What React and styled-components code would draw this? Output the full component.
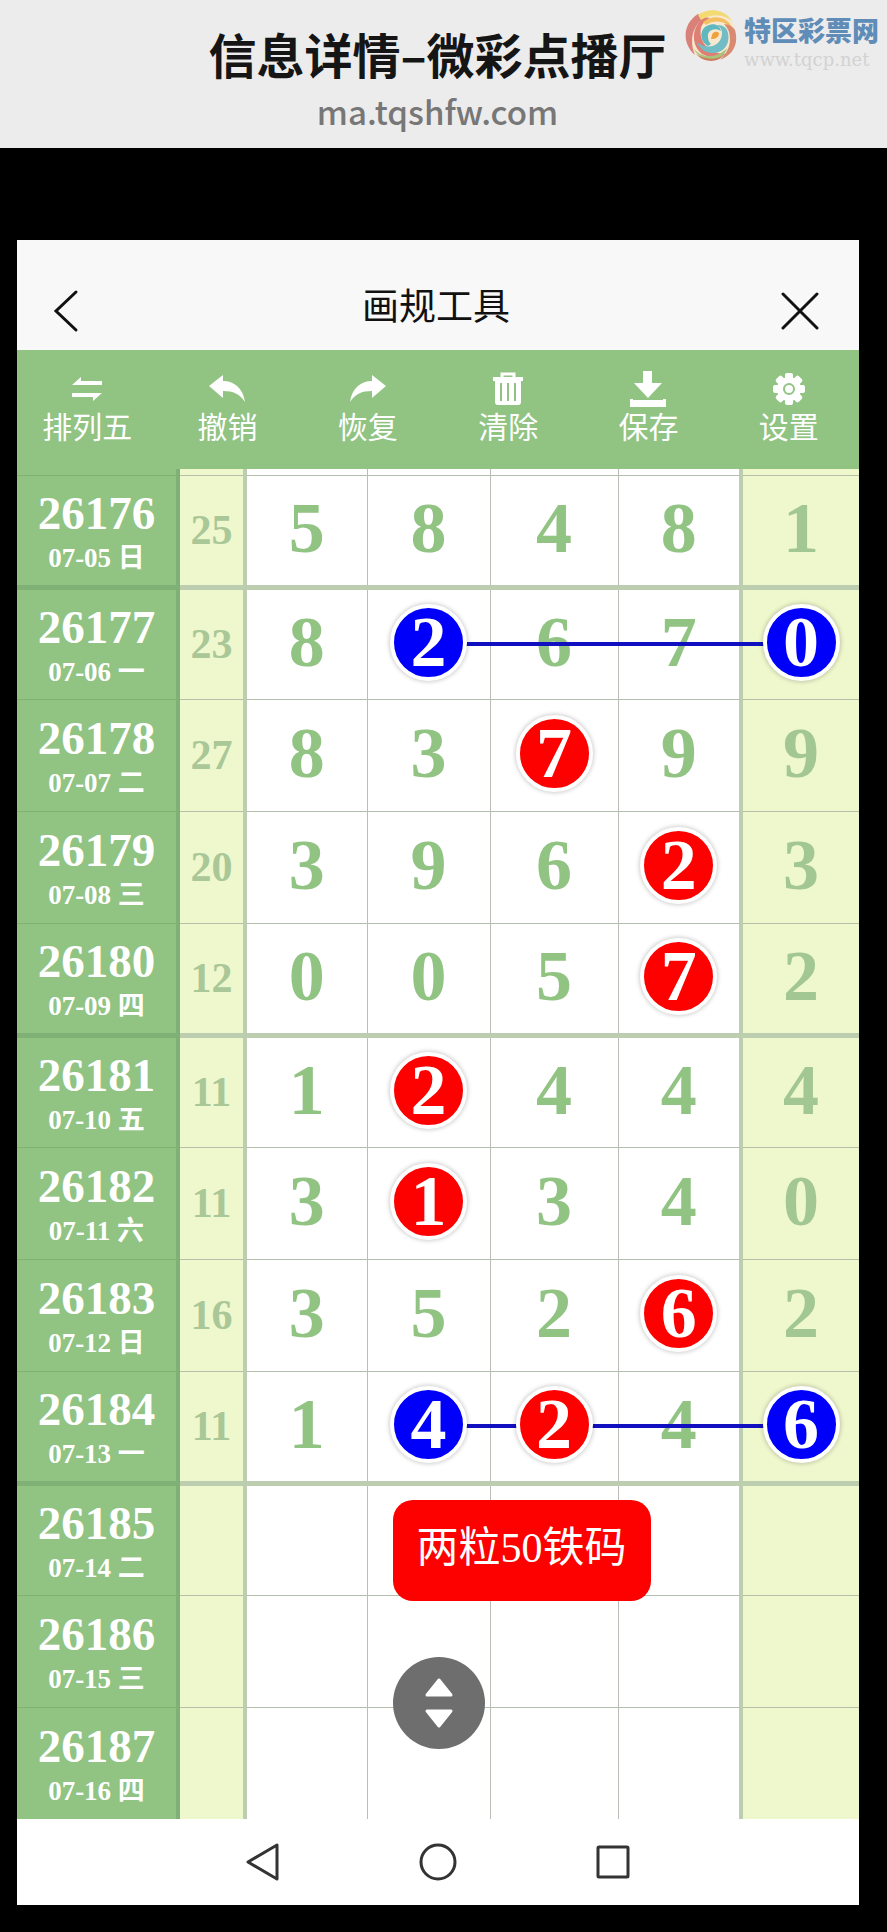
import React from "react";
import styled, { createGlobalStyle, css } from "styled-components";

const GlobalStyle = createGlobalStyle`
  * {
    box-sizing: border-box;
  }

  body {
    margin: 0;
    background: #000;
    font-family: "Liberation Serif", "Noto Sans CJK SC", serif;
  }

  button {
    padding: 0;
    border: 0;
    background: none;
    font: inherit;
    color: inherit;
    cursor: pointer;
  }
`;

// mark: "blue" | "red", link: "start" | "through" | "end"
const draws = [
  { issue: "26176", date: "07-05 日", sum: 25, balls: [5, 8, 4, 8, 1], thick: true },
  {
    issue: "26177",
    date: "07-06 一",
    sum: 23,
    balls: [8, 2, 6, 7, 0],
    marks: { 1: "blue", 4: "blue" },
    links: { 1: "start", 2: "through", 3: "through", 4: "end" },
  },
  { issue: "26178", date: "07-07 二", sum: 27, balls: [8, 3, 7, 9, 9], marks: { 2: "red" } },
  { issue: "26179", date: "07-08 三", sum: 20, balls: [3, 9, 6, 2, 3], marks: { 3: "red" } },
  { issue: "26180", date: "07-09 四", sum: 12, balls: [0, 0, 5, 7, 2], marks: { 3: "red" }, thick: true },
  { issue: "26181", date: "07-10 五", sum: 11, balls: [1, 2, 4, 4, 4], marks: { 1: "red" } },
  { issue: "26182", date: "07-11 六", sum: 11, balls: [3, 1, 3, 4, 0], marks: { 1: "red" } },
  { issue: "26183", date: "07-12 日", sum: 16, balls: [3, 5, 2, 6, 2], marks: { 3: "red" } },
  {
    issue: "26184",
    date: "07-13 一",
    sum: 11,
    balls: [1, 4, 2, 4, 6],
    marks: { 1: "blue", 2: "red", 4: "blue" },
    links: { 1: "start", 2: "through", 3: "through", 4: "end" },
    thick: true,
  },
  { issue: "26185", date: "07-14 二", balls: [], note: { column: 1, text: "两粒50铁码" } },
  { issue: "26186", date: "07-15 三", balls: [] },
  { issue: "26187", date: "07-16 四", balls: [] },
];

const columns = [0, 1, 2, 3, 4];

const SwapIcon = () => (
  <svg width="30" height="26" viewBox="0 0 30 26" fill="#fff" aria-hidden="true">
    <path d="M0 9 9 1v4h21v4zM30 17l-9 8v-4H0v-4z" />
  </svg>
);

const UndoIcon = () => (
  <svg width="36" height="28" viewBox="0 0 36 28" fill="#fff" aria-hidden="true">
    <path d="M0 11 14 0v6c11 0 20 7 22 21-5-8-12-11-22-11v7z" />
  </svg>
);

const RedoIcon = () => (
  <svg width="36" height="28" viewBox="0 0 36 28" fill="#fff" aria-hidden="true">
    <path d="M36 11 22 0v6C11 6 2 13 0 27c5-8 12-11 22-11v7z" />
  </svg>
);

const TrashIcon = () => (
  <svg width="30" height="34" viewBox="0 0 30 34" aria-hidden="true">
    <path d="M9 6V2h12v4" fill="none" stroke="#fff" strokeWidth="3" />
    <path d="M0 5h30v4h-2v21q0 3-3 3H5q-3 0-3-3V9H0z" fill="#fff" />
    <path d="M8 11v18M15 11v18M22 11v18" stroke="#91c383" strokeWidth="2" />
  </svg>
);

const SaveIcon = () => (
  <svg width="36" height="36" viewBox="0 0 36 36" fill="#fff" aria-hidden="true">
    <path d="M13 0h9v12h10L18 27 4 12h9z" />
    <path d="M0 28h3v1h30v-1h3v8H0z" />
  </svg>
);

const GearIcon = () => (
  <svg width="34" height="34" viewBox="0 0 34 34" aria-hidden="true">
    <g fill="#fff">
      <circle cx="17" cy="17" r="12" />
      {[0, 45, 90, 135, 180, 225, 270, 315].map((angle) => (
        <rect key={angle} x="13" y="1" width="8" height="9" rx="2" transform={`rotate(${angle} 17 17)`} />
      ))}
    </g>
    <circle cx="17" cy="17" r="5" fill="none" stroke="#91c383" strokeWidth="2" />
  </svg>
);

const SwirlLogo = () => (
  <svg width="54" height="54" viewBox="0 0 54 54" aria-hidden="true">
    <circle cx="27" cy="27" r="25" fill="#f6e9cf" />
    <path d="M14 6C-2 16-2 36 11 47 5 33 8 17 22 8z" fill="#d9807a" />
    <path d="M20 9C8 18 6 36 18 46c10 5 18 4 24 0C26 46 14 34 17 20c1-4 5-8 9-10z" fill="#df7f74" />
    <path d="M14 7C25-1 41 1 48 13 39 6 28 5 17 12z" fill="#f3da72" />
    <path d="M19 14C30 5 46 9 50 24 44 14 32 10 22 17z" fill="#f2c060" />
    <path d="M51 22c4 14-2 25-15 30 8-8 12-17 9-28-1-3-3-6-5-8 5 0 9 3 11 6z" fill="#d98a72" />
    <path d="M43 22c5 13-3 24-16 23-7-1-12-5-14-11 10 9 25 4 25-9 0-4-2-6-5-8 4 0 8 1 10 5z" fill="#72bcc6" />
    <path d="M9 40c9 11 24 11 34 0-3 13-24 18-34 0z" fill="#a6c47c" />
    <path d="M12 46c9 6 20 6 28 1-6 8-20 8-28-1z" fill="#cf7b5c" />
    <path d="M24 38c-9-5-9-18 1-21 6-2 11 1 12 6-6-4-14-1-13 6 0 3 1 5 3 7z" fill="#5fb7bf" />
    <path d="M28 27c1-4 5-4 7-2 0 4-3 6-8 6z" fill="#f0a03c" />
  </svg>
);

const tools = [
  { label: "排列五", Icon: SwapIcon },
  { label: "撤销", Icon: UndoIcon },
  { label: "恢复", Icon: RedoIcon },
  { label: "清除", Icon: TrashIcon },
  { label: "保存", Icon: SaveIcon },
  { label: "设置", Icon: GearIcon },
];

const App = () => {
  return (
    <Page>
      <GlobalStyle />
      <SiteHeader>
        <SiteTitle>信息详情–微彩点播厅</SiteTitle>
        <SiteUrl>ma.tqshfw.com</SiteUrl>
        <Brand>
          <SwirlLogo />
          <BrandText>
            <BrandName>特区彩票网</BrandName>
            <BrandUrl>www.tqcp.net</BrandUrl>
          </BrandText>
        </Brand>
      </SiteHeader>

      <Phone>
        <TitleBar>
          <BarButton aria-label="返回">
            <svg width="26" height="44" viewBox="0 0 26 44" fill="none" stroke="#111" strokeWidth="3" strokeLinecap="round">
              <path d="M23 3 3 22l20 19" />
            </svg>
          </BarButton>
          <Title>画规工具</Title>
          <BarButton aria-label="关闭" $end>
            <svg width="38" height="38" viewBox="0 0 38 38" fill="none" stroke="#111" strokeWidth="3" strokeLinecap="round">
              <path d="M2 2l34 34M36 2 2 36" />
            </svg>
          </BarButton>
        </TitleBar>

        <Toolbar>
          {tools.map(({ label, Icon }) => (
            <Tool key={label}>
              <ToolIcon>
                <Icon />
              </ToolIcon>
              {label}
            </Tool>
          ))}
        </Toolbar>

        <Board>
          <Chart>
            <colgroup>
              <Col $width={161} />
              <Col $width={67} />
              <Col $width={122} />
              <Col $width={123} />
              <Col $width={128} />
              <Col $width={123} />
              <Col $width={118} />
            </colgroup>
            <tbody>
              <SliverRow aria-hidden="true">
                <IssueCell as="td" />
                <SumCell />
                {columns.map((i) => (
                  <BallCell key={i} $column={i} />
                ))}
              </SliverRow>
              {draws.map((draw) => (
                <DrawRow key={draw.issue} draw={draw} />
              ))}
            </tbody>
          </Chart>
          <ScrollButton aria-label="滚动">
            <svg width="30" height="52" viewBox="0 0 30 52" fill="#fff" stroke="#fff" strokeWidth="3" strokeLinejoin="round">
              <path d="M15 3 27 18H3zM15 49 27 34H3z" />
            </svg>
          </ScrollButton>
        </Board>

        <NavBar>
          <button aria-label="后退">
            <NavIcon viewBox="0 0 38 38">
              <path d="M33 2v34L4 19z" />
            </NavIcon>
          </button>
          <button aria-label="主页">
            <NavIcon viewBox="0 0 38 38">
              <circle cx="19" cy="19" r="17" />
            </NavIcon>
          </button>
          <button aria-label="最近任务">
            <NavIcon viewBox="0 0 38 38">
              <rect x="4" y="4" width="30" height="30" rx="1" />
            </NavIcon>
          </button>
        </NavBar>
      </Phone>
    </Page>
  );
};

const DrawRow = ({ draw }) => {
  const { issue, date, sum, balls, marks = {}, links = {}, note, thick } = draw;

  return (
    <Row>
      <IssueCell scope="row" $thick={thick}>
        <Issue>{issue}</Issue>
        <DrawDate>{date}</DrawDate>
      </IssueCell>
      <SumCell $thick={thick}>{sum}</SumCell>
      {columns.map((i) => (
        <BallCell key={i} $column={i} $thick={thick}>
          {marks[i] ? <Ball $color={marks[i]}>{balls[i]}</Ball> : balls[i]}
          {links[i] && <Link $part={links[i]} />}
          {note && note.column === i && <Note>{note.text}</Note>}
        </BallCell>
      ))}
    </Row>
  );
};

export default App;

const Page = styled.div`
  padding-bottom: 27px;
`;

const SiteHeader = styled.header`
  position: relative;
  display: flex;
  flex-direction: column;
  align-items: center;
  height: 148px;
  padding: 20px 12px 0 0;
  background: #ececec;
`;

const SiteTitle = styled.h1`
  margin: 0;
  font: 700 48px/66px "Noto Sans CJK SC", sans-serif;
  color: #151515;
`;

const SiteUrl = styled.p`
  margin: 0;
  font: 500 33px/50px "Noto Sans CJK SC", sans-serif;
  color: #777;
`;

const Brand = styled.div`
  position: absolute;
  top: 8px;
  right: 8px;
  display: flex;
  gap: 6px;
`;

const BrandText = styled.div`
  display: flex;
  flex-direction: column;
  padding-top: 3px;
`;

const BrandName = styled.span`
  font: 900 27px/38px "Noto Sans CJK SC", sans-serif;
  color: #5f8db8;
`;

const BrandUrl = styled.span`
  font: 18px/22px "DejaVu Serif", serif;
  color: #d2d2d2;
`;

const Phone = styled.main`
  margin: 92px 28px 0 17px;
  background: #fff;
`;

const TitleBar = styled.div`
  display: grid;
  grid-template-columns: 1fr auto 1fr;
  align-items: center;
  height: 110px;
  padding: 32px 40px 0 36px;
  background: #f8f8f8;
`;

const BarButton = styled.button`
  display: flex;
  justify-self: ${({ $end }) => ($end ? "end" : "start")};
`;

const Title = styled.h2`
  margin: 0;
  padding-bottom: 14px;
  font: 400 37px/44px "Noto Sans CJK SC", sans-serif;
  color: #111;
`;

const Toolbar = styled.div`
  display: grid;
  grid-template-columns: repeat(6, 1fr);
  height: 119px;
  background: #91c383;
`;

const Tool = styled.button`
  && {
    display: flex;
    flex-direction: column;
    align-items: center;
    padding-top: 20px;
    font: 30px/34px "Noto Sans CJK SC", sans-serif;
    color: #fff;
  }
`;

const ToolIcon = styled.span`
  display: flex;
  align-items: center;
  height: 38px;
`;

const Board = styled.div`
  position: relative;
`;

const Chart = styled.table`
  width: 100%;
  table-layout: fixed;
  border-collapse: collapse;
`;

const Col = styled.col`
  width: ${({ $width }) => $width}px;
`;

const Row = styled.tr`
  height: 112px;

  &:last-child > * {
    border-bottom: 0;
  }
`;

const SliverRow = styled.tr`
  height: 6px;
`;

const cell = css`
  padding: 0;
  text-align: center;
  vertical-align: middle;
  border-bottom: ${({ $thick }) => ($thick ? "5px solid #bccdb0" : "1px solid #b3bfab")};
`;

const IssueCell = styled.th`
  ${cell}
  background: #91c383;
  border-right: 4px solid #7fb075;
  border-bottom-color: #7fb075;
  color: #fff;
`;

const Issue = styled.div`
  padding-top: 8px;
  font-size: 47px;
  line-height: 48px;
`;

const DrawDate = styled.div`
  font-size: 27px;
  line-height: 42px;
`;

const SumCell = styled.td`
  ${cell}
  background: #eff7cd;
  border-right: 4px solid #bccdb0;
  font-size: 42px;
  font-weight: bold;
  color: #a9c797;
`;

const BallCell = styled.td`
  ${cell}
  position: relative;
  padding-bottom: 4px;
  border-right: ${({ $column }) => ($column === 3 ? "4px solid #bccdb0" : "1px solid #b9bfb6")};
  font-size: 72px;
  line-height: 72px;
  font-weight: bold;
  color: #91c383;

  ${({ $column }) =>
    $column === 4 &&
    css`
      background: #eff7cd;
      border-right: 0;
      color: #a3c792;
    `}
`;

const ballColors = { blue: "#0000fa", red: "#fd0000" };

const Ball = styled.span`
  position: relative;
  z-index: 2;
  display: block;
  width: 77px;
  margin: 0 auto;
  border: 4px solid #fff;
  border-radius: 50%;
  box-shadow: 0 0 4px 1px rgba(0, 0, 0, 0.2);
  background: ${({ $color }) => ballColors[$color]};
  line-height: 69px;
  color: #fff;
`;

const Link = styled.i`
  position: absolute;
  z-index: 1;
  top: 50%;
  left: ${({ $part }) => ($part === "start" ? "50%" : "-3px")};
  right: ${({ $part }) => ($part === "end" ? "50%" : "-3px")};
  height: 4px;
  margin-top: -2px;
  background: #1010c0;
`;

const Note = styled.div`
  position: absolute;
  z-index: 3;
  top: 14px;
  left: 25px;
  padding: 18px 24px 23px;
  border-radius: 20px;
  background: #fd0000;
  font-size: 42px;
  line-height: 60px;
  font-weight: normal;
  white-space: nowrap;
  color: #fff;
`;

const ScrollButton = styled.button`
  && {
    position: absolute;
    z-index: 3;
    bottom: 70px;
    left: calc(50% - 45px);
    display: flex;
    align-items: center;
    justify-content: center;
    width: 92px;
    height: 92px;
    border-radius: 50%;
    background: #6e6e6e;
  }
`;

const NavBar = styled.nav`
  display: flex;
  align-items: center;
  justify-content: center;
  gap: 137px;
  height: 86px;
`;

const NavIcon = styled.svg`
  display: block;
  width: 38px;
  height: 38px;
  fill: none;
  stroke: #333;
  stroke-width: 3;
  stroke-linejoin: round;
`;
